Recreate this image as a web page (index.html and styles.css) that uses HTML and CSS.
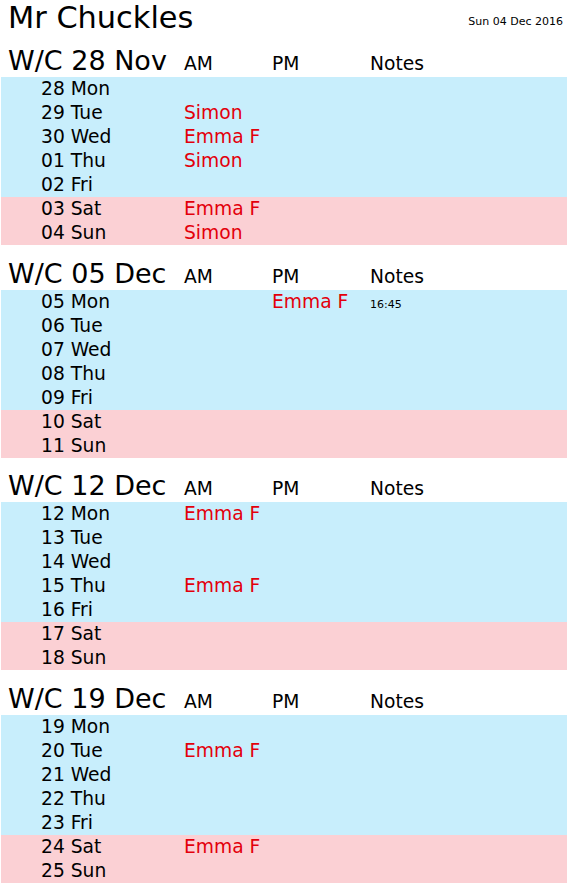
FILE: index.html
```html
<!DOCTYPE html>
<html>
<head>
<meta charset="utf-8">
<title>Mr Chuckles</title>
<link rel="stylesheet" href="styles.css">
</head>
<body>
<div class="page">
  <div class="top">
    <h1 class="title">Mr Chuckles</h1>
    <div class="today">Sun 04 Dec 2016</div>
  </div>

  <section class="week">
    <div class="head"><span class="wc">W/C 28 Nov</span><span>AM</span><span>PM</span><span>Notes</span></div>
    <div class="row wd"><span class="day">28 Mon</span><span class="who"></span><span class="who"></span><span class="note"></span></div>
    <div class="row wd"><span class="day">29 Tue</span><span class="who">Simon</span><span class="who"></span><span class="note"></span></div>
    <div class="row wd"><span class="day">30 Wed</span><span class="who">Emma F</span><span class="who"></span><span class="note"></span></div>
    <div class="row wd"><span class="day">01 Thu</span><span class="who">Simon</span><span class="who"></span><span class="note"></span></div>
    <div class="row wd"><span class="day">02 Fri</span><span class="who"></span><span class="who"></span><span class="note"></span></div>
    <div class="row we"><span class="day">03 Sat</span><span class="who">Emma F</span><span class="who"></span><span class="note"></span></div>
    <div class="row we"><span class="day">04 Sun</span><span class="who">Simon</span><span class="who"></span><span class="note"></span></div>
  </section>

  <section class="week">
    <div class="head"><span class="wc">W/C 05 Dec</span><span>AM</span><span>PM</span><span>Notes</span></div>
    <div class="row wd"><span class="day">05 Mon</span><span class="who"></span><span class="who">Emma F</span><span class="note">16:45</span></div>
    <div class="row wd"><span class="day">06 Tue</span><span class="who"></span><span class="who"></span><span class="note"></span></div>
    <div class="row wd"><span class="day">07 Wed</span><span class="who"></span><span class="who"></span><span class="note"></span></div>
    <div class="row wd"><span class="day">08 Thu</span><span class="who"></span><span class="who"></span><span class="note"></span></div>
    <div class="row wd"><span class="day">09 Fri</span><span class="who"></span><span class="who"></span><span class="note"></span></div>
    <div class="row we"><span class="day">10 Sat</span><span class="who"></span><span class="who"></span><span class="note"></span></div>
    <div class="row we"><span class="day">11 Sun</span><span class="who"></span><span class="who"></span><span class="note"></span></div>
  </section>

  <section class="week">
    <div class="head"><span class="wc">W/C 12 Dec</span><span>AM</span><span>PM</span><span>Notes</span></div>
    <div class="row wd"><span class="day">12 Mon</span><span class="who">Emma F</span><span class="who"></span><span class="note"></span></div>
    <div class="row wd"><span class="day">13 Tue</span><span class="who"></span><span class="who"></span><span class="note"></span></div>
    <div class="row wd"><span class="day">14 Wed</span><span class="who"></span><span class="who"></span><span class="note"></span></div>
    <div class="row wd"><span class="day">15 Thu</span><span class="who">Emma F</span><span class="who"></span><span class="note"></span></div>
    <div class="row wd"><span class="day">16 Fri</span><span class="who"></span><span class="who"></span><span class="note"></span></div>
    <div class="row we"><span class="day">17 Sat</span><span class="who"></span><span class="who"></span><span class="note"></span></div>
    <div class="row we"><span class="day">18 Sun</span><span class="who"></span><span class="who"></span><span class="note"></span></div>
  </section>

  <section class="week">
    <div class="head"><span class="wc">W/C 19 Dec</span><span>AM</span><span>PM</span><span>Notes</span></div>
    <div class="row wd"><span class="day">19 Mon</span><span class="who"></span><span class="who"></span><span class="note"></span></div>
    <div class="row wd"><span class="day">20 Tue</span><span class="who">Emma F</span><span class="who"></span><span class="note"></span></div>
    <div class="row wd"><span class="day">21 Wed</span><span class="who"></span><span class="who"></span><span class="note"></span></div>
    <div class="row wd"><span class="day">22 Thu</span><span class="who"></span><span class="who"></span><span class="note"></span></div>
    <div class="row wd"><span class="day">23 Fri</span><span class="who"></span><span class="who"></span><span class="note"></span></div>
    <div class="row we"><span class="day">24 Sat</span><span class="who">Emma F</span><span class="who"></span><span class="note"></span></div>
    <div class="row we"><span class="day">25 Sun</span><span class="who"></span><span class="who"></span><span class="note"></span></div>
  </section>
</div>
</body>
</html>
```
FILE: styles.css
```css
html, body {
  margin: 0;
  padding: 0;
  background: #fff;
}
body {
  font-family: "DejaVu Sans", Verdana, sans-serif;
  color: #000;
}
.page {
  padding: 0 1px;
}
.top {
  display: flex;
  justify-content: space-between;
  align-items: flex-start;
  height: 33px;
}
.title {
  margin: 0;
  padding-left: 7px;
  font-size: 30.4px;
  font-weight: normal;
  line-height: 35px;
}
.today {
  font-size: 11px;
  line-height: 13px;
  margin-top: 15px;
  padding-right: 4px;
}
.week {
  margin-top: 17px;
}
.week + .week {
  margin-top: 17.5px;
}
.head,
.row {
  display: grid;
  grid-template-columns: 181px 88px 98px 1fr;
  align-items: baseline;
}
.head {
  height: 27px;
  font-size: 18.7px;
  line-height: 21px;
}
.head span {
  padding-left: 2px;
}
.head .wc {
  padding-left: 7px;
  font-size: 27px;
}
.row {
  height: 24px;
  font-size: 18.7px;
  line-height: 24px;
}
.wd { background: #c8eefc; }
.we { background: #fbd0d4; }
.day {
  padding-left: 40px;
}
.who {
  padding-left: 2px;
  color: #e3000b;
}
.note {
  padding-left: 2px;
  font-size: 11px;
}
```
